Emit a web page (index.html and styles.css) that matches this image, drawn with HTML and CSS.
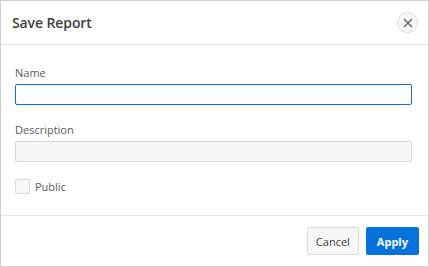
FILE: index.html
```html
<!DOCTYPE html>
<html lang="en">
<head>
  <meta charset="utf-8">
  <title>Save Report</title>
  <link rel="stylesheet" href="styles.css">
</head>
<body>
  <div class="dialog">
    <!-- header -->
    <div class="dlg-header">
      <h1 class="dlg-title">Save Report</h1>
      <button class="dlg-close" title="Close">
        <svg width="10" height="10" viewBox="0 0 10 10"><path d="M1 1L9 9M9 1L1 9" stroke="#555" stroke-width="1.1" fill="none"/></svg>
      </button>
    </div>

    <!-- form -->
    <div class="dlg-body">
      <div class="field">
        <label class="field-label" for="rName">Name</label>
        <input id="rName" class="text-input is-focused" type="text">
      </div>
      <div class="field">
        <label class="field-label" for="rDesc">Description</label>
        <input id="rDesc" class="text-input is-muted" type="text">
      </div>
      <label class="check-row">
        <span class="check-box"></span>
        <span class="check-label">Public</span>
      </label>
    </div>

    <!-- buttons -->
    <div class="dlg-footer">
      <button class="btn">Cancel</button>
      <button class="btn btn-hot">Apply</button>
    </div>
  </div>
</body>
</html>
```

FILE: styles.css
```css
* { margin: 0; padding: 0; box-sizing: border-box; }
body {
  font-family: "Open Sans", "Noto Sans", sans-serif;
  background: #fff;
  color: #404040;
}
/* dialog frame */
.dialog {
  width: 429px;
  height: 267px;
  border: 1px solid #cfcfcf;
  display: flex;
  flex-direction: column;
  background: #fff;
}
.dlg-header {
  height: 44px;
  border-bottom: 1px solid #e6e6e6;
  display: flex;
  align-items: center;
  justify-content: space-between;
  padding: 0 10px 0 11px;
}
.dlg-title {
  font-size: 14px;
  font-weight: 600;
  color: #404040;
  letter-spacing: -0.1px;
}
.dlg-close {
  width: 21px;
  height: 21px;
  border-radius: 50%;
  border: 1px solid #dcdcdc;
  background: #f8f8f8;
  display: flex;
  align-items: center;
  justify-content: center;
}
/* form body */
.dlg-body {
  flex: 1;
  padding: 20px 16px 0 14px;
  border-bottom: 1px solid #e6e6e6;
}
.field { margin-bottom: 17px; }
.field-label {
  display: block;
  font-size: 11px;
  line-height: 16px;
  color: #5a5a5a;
  margin-bottom: 3px;
}
.text-input {
  display: block;
  width: 100%;
  height: 21px;
  border: 1px solid #d6d6d6;
  border-radius: 2px;
  background: #fff;
  outline: none;
}
.text-input.is-focused { border-color: #0a72dc; }
.text-input.is-muted { background: #f7f7f7; }
.check-row {
  display: flex;
  align-items: center;
  gap: 5px;
  margin-top: 1px;
}
.check-box {
  width: 15px;
  height: 15px;
  border: 1px solid #dadada;
  border-radius: 2px;
  background: #f8f8f8;
}
.check-label { font-size: 11px; color: #5a5a5a; }
/* footer buttons */
.dlg-footer {
  height: 50px;
  display: flex;
  justify-content: flex-end;
  align-items: flex-start;
  gap: 7px;
  padding: 11px 9px 0 0;
}
.btn {
  height: 28px;
  padding: 0 8px;
  font-family: inherit;
  font-size: 11px;
  color: #404040;
  background: #f7f7f7;
  border: 1px solid #dcdcdc;
  border-radius: 2px;
}
.btn-hot {
  background: #0672dc;
  border-color: #0672dc;
  color: #fff;
  font-weight: 700;
  padding: 0 10px;
}
```
